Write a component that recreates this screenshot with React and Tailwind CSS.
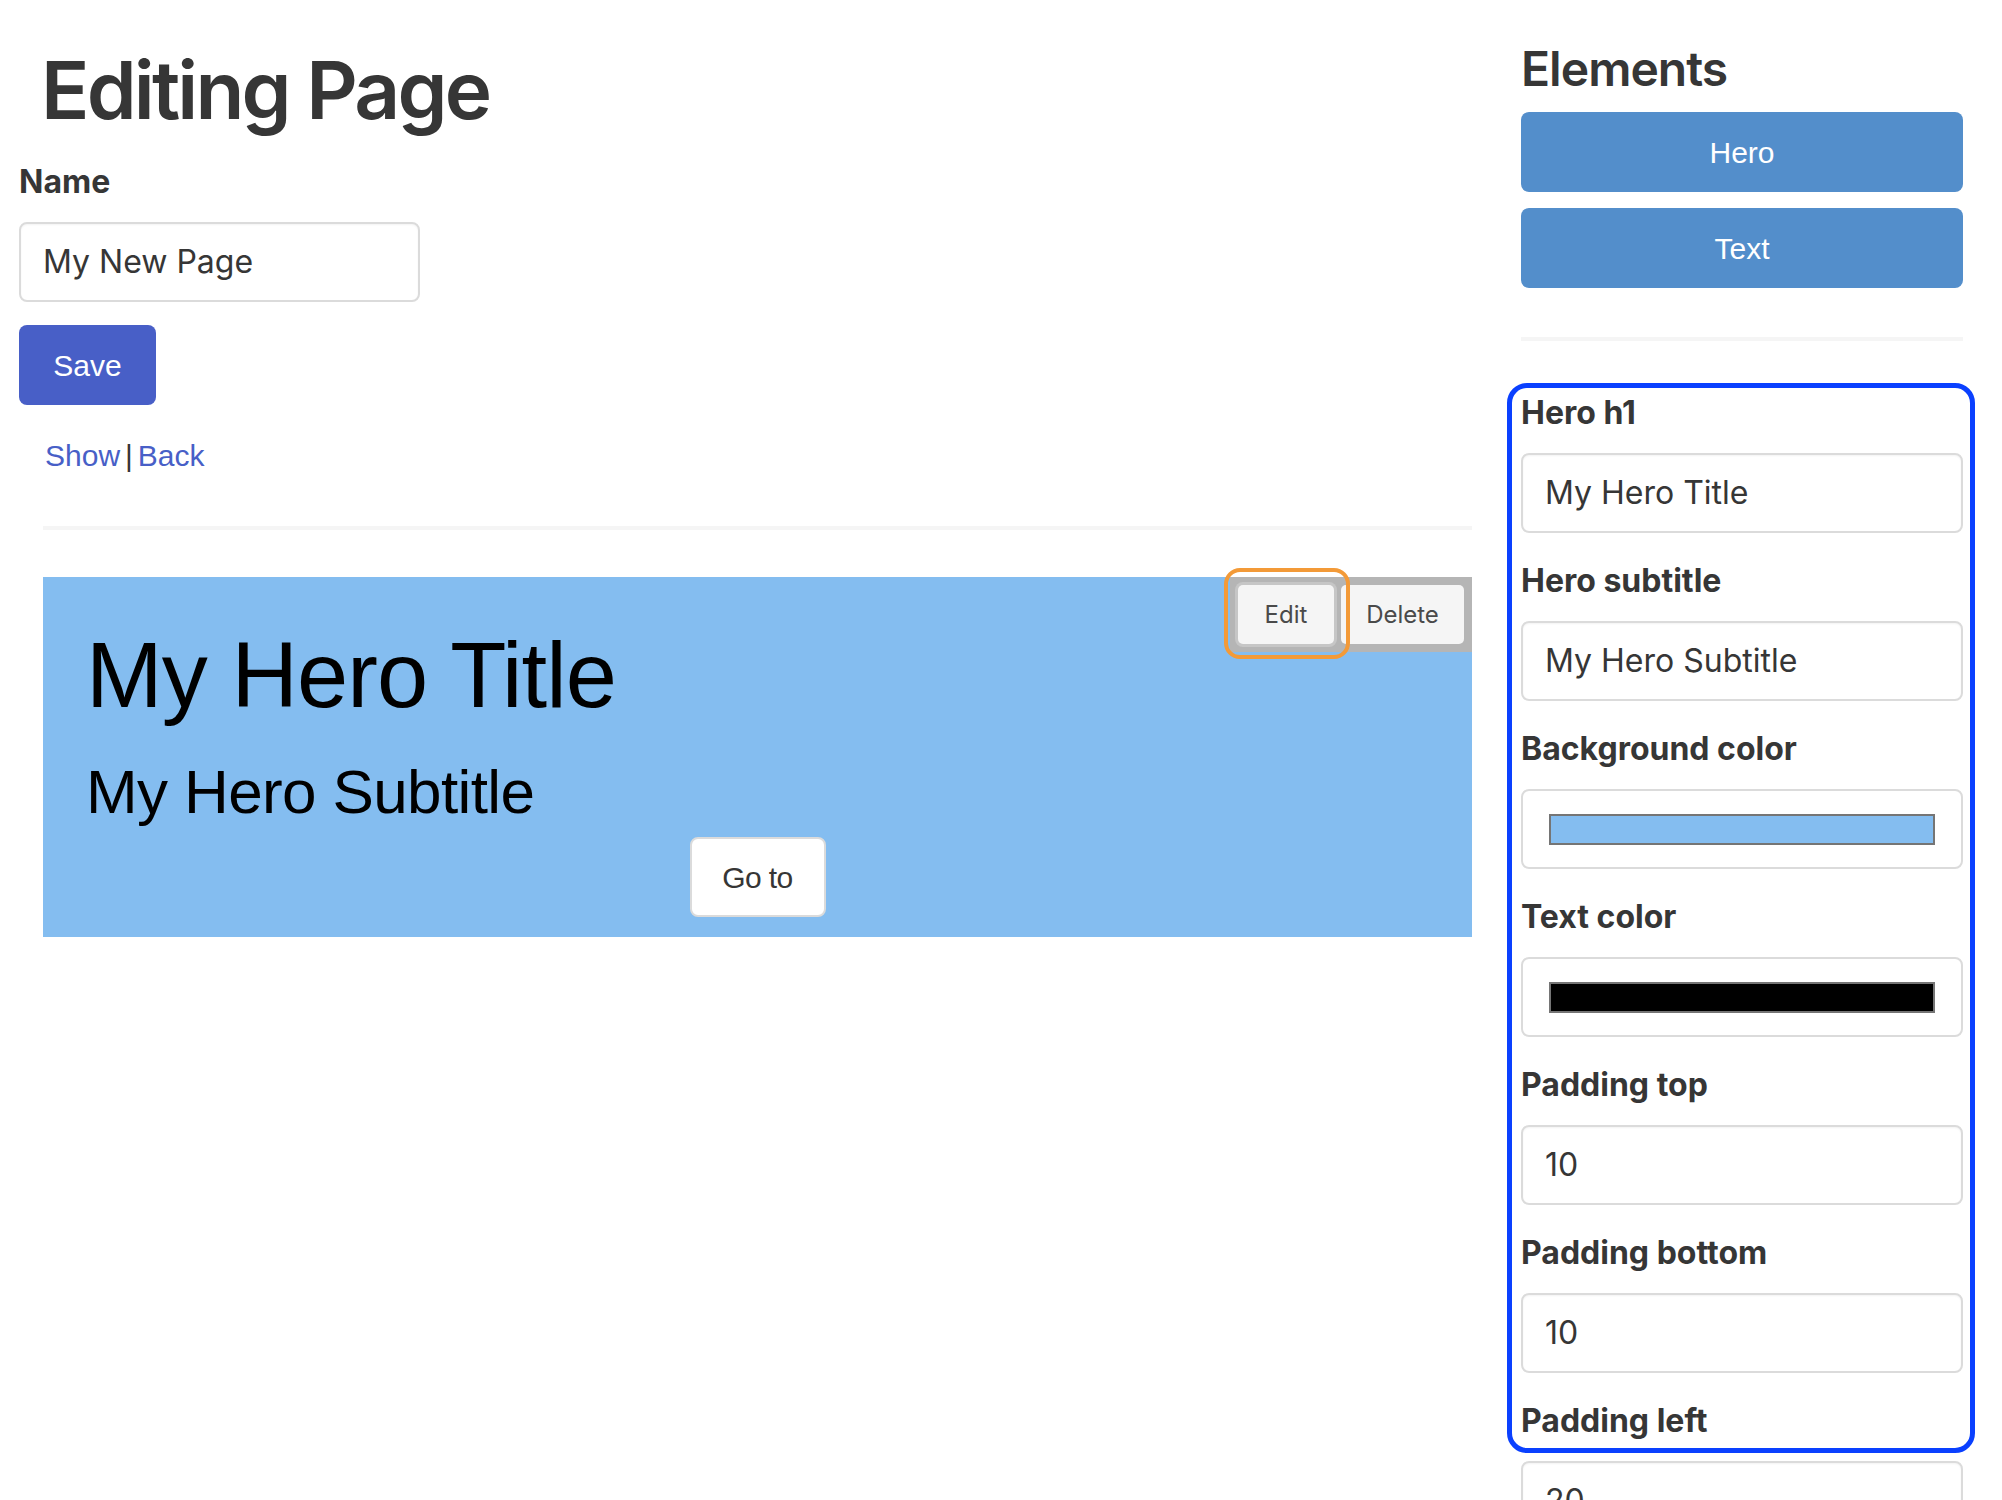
import React from "react";

const fields = [
  { label: "Hero h1", value: "My Hero Title" },
  { label: "Hero subtitle", value: "My Hero Subtitle" },
  { label: "Background color", color: "#84bdf0" },
  { label: "Text color", color: "#000000" },
  { label: "Padding top", value: "10" },
  { label: "Padding bottom", value: "10" },
  { label: "Padding left", value: "20" },
];

function Field({ label, value, color }) {
  return (
    <div className="mb-[24px]">
      <label className="block text-[32px] leading-[48px] font-bold mb-[16px] text-[#363636]">
        {label}
      </label>
      {color ? (
        <div className="h-[80px] w-full border-2 border-[#dbdbdb] rounded-[8px] bg-white px-[26px] flex items-center">
          <div
            className="h-[31px] w-full border-2 border-[#757575]"
            style={{ backgroundColor: color }}
          />
        </div>
      ) : (
        <div className="h-[80px] w-full border-2 border-[#dbdbdb] rounded-[8px] bg-white px-[22px] flex items-center text-[32px] text-[#363636] shadow-[inset_0_1px_2px_rgba(10,10,10,0.05)]">
          {value}
        </div>
      )}
    </div>
  );
}

export default function App() {
  return (
    <div className="w-[2002px] h-[1500px] overflow-hidden bg-white flex items-start pl-[19px] pt-[45px] font-[Inter,sans-serif] text-[#363636]">
      {/* Left column */}
      <div className="w-[1453px] shrink-0 flex flex-col">
        <h1 className="ml-[22px] text-[80px] leading-[90px] font-semibold tracking-[-0.035em] text-[#363636]">
          Editing Page
        </h1>
        <label className="mt-[23px] block text-[32px] leading-[48px] font-bold">
          Name
        </label>
        <div className="mt-[16px] w-[401px] h-[80px] border-2 border-[#dbdbdb] rounded-[8px] px-[22px] flex items-center text-[32px] text-[#363636] shadow-[inset_0_1px_2px_rgba(10,10,10,0.05)]">
          My New Page
        </div>
        <button className="mt-[23px] w-[137px] h-[80px] bg-[#485fc7] rounded-[8px] text-white text-[30px] font-['Liberation_Sans',Arial,sans-serif] flex items-center justify-center">
          Save
        </button>
        <div className="mt-[28px] ml-[26px] text-[30px] leading-[45px] font-['Liberation_Sans',Arial,sans-serif] flex items-center">
          <span className="text-[#485fc7]">Show</span>
          <span className="mx-[5px] text-[#363636]">|</span>
          <span className="text-[#485fc7]">Back</span>
        </div>
        <div className="mt-[48px] ml-[24px] h-[4px] bg-[#f5f5f5]" />
        {/* Hero preview */}
        <div className="relative mt-[47px] ml-[24px] h-[360px] bg-[#84bdf0] pt-[52px] pb-[20px] flex flex-col font-['Liberation_Sans',Arial,sans-serif] text-black">
          <h1 className="pl-[43px] text-[92px] leading-[92px] tracking-[-0.01em]">
            My Hero Title
          </h1>
          <h2 className="pl-[43px] mt-[40px] text-[62px] leading-[62px] tracking-[-0.01em]">
            My Hero Subtitle
          </h2>
          <div className="mt-[14px] flex justify-center">
            <button className="w-[136px] h-[80px] bg-white border-2 border-[#dbdbdb] rounded-[8px] text-[30px] tracking-[-0.02em] text-[#363636] flex items-center justify-center">
              Go to
            </button>
          </div>
          {/* Toolbar */}
          <div className="absolute top-0 right-0 flex gap-[7px] p-[8px] bg-[#b5b5b5] font-[Inter,sans-serif]">
            <div className="relative">
              <button className="w-[96px] h-[59px] bg-[#f5f5f5] rounded-[5px] ring-[3px] ring-[#c6c6c6] text-[24px] text-[#4a4a4a] flex items-center justify-center">
                Edit
              </button>
              <div className="absolute left-[-14px] top-[-17px] w-[126px] h-[91px] border-[4px] border-[#f39a38] rounded-[16px] pointer-events-none" />
            </div>
            <button className="w-[123px] h-[59px] bg-[#f5f5f5] rounded-[5px] text-[24px] text-[#4a4a4a] flex items-center justify-center">
              Delete
            </button>
          </div>
        </div>
      </div>

      {/* Right column */}
      <div className="ml-[49px] w-[442px] shrink-0 block">
        <h2 className="text-[48px] leading-[48px] font-semibold tracking-[-0.02em] text-[#363636]">
          Elements
        </h2>
        <button className="mt-[19px] h-[80px] w-full bg-[#538ecb] rounded-[8px] text-white text-[30px] font-['Liberation_Sans',Arial,sans-serif] flex items-center justify-center">
          Hero
        </button>
        <button className="mt-[16px] h-[80px] w-full bg-[#538ecb] rounded-[8px] text-white text-[30px] font-['Liberation_Sans',Arial,sans-serif] flex items-center justify-center">
          Text
        </button>
        <div className="mt-[49px] h-[4px] bg-[#f5f5f5]" />
        <div className="relative mt-[48px]">
          {fields.map((f) => (
            <Field key={f.label} {...f} />
          ))}
          <div className="absolute left-[-14px] right-[-12px] top-[-6px] h-[1070px] border-[5px] border-[#0a40ff] rounded-[20px] pointer-events-none" />
        </div>
      </div>
    </div>
  );
}
